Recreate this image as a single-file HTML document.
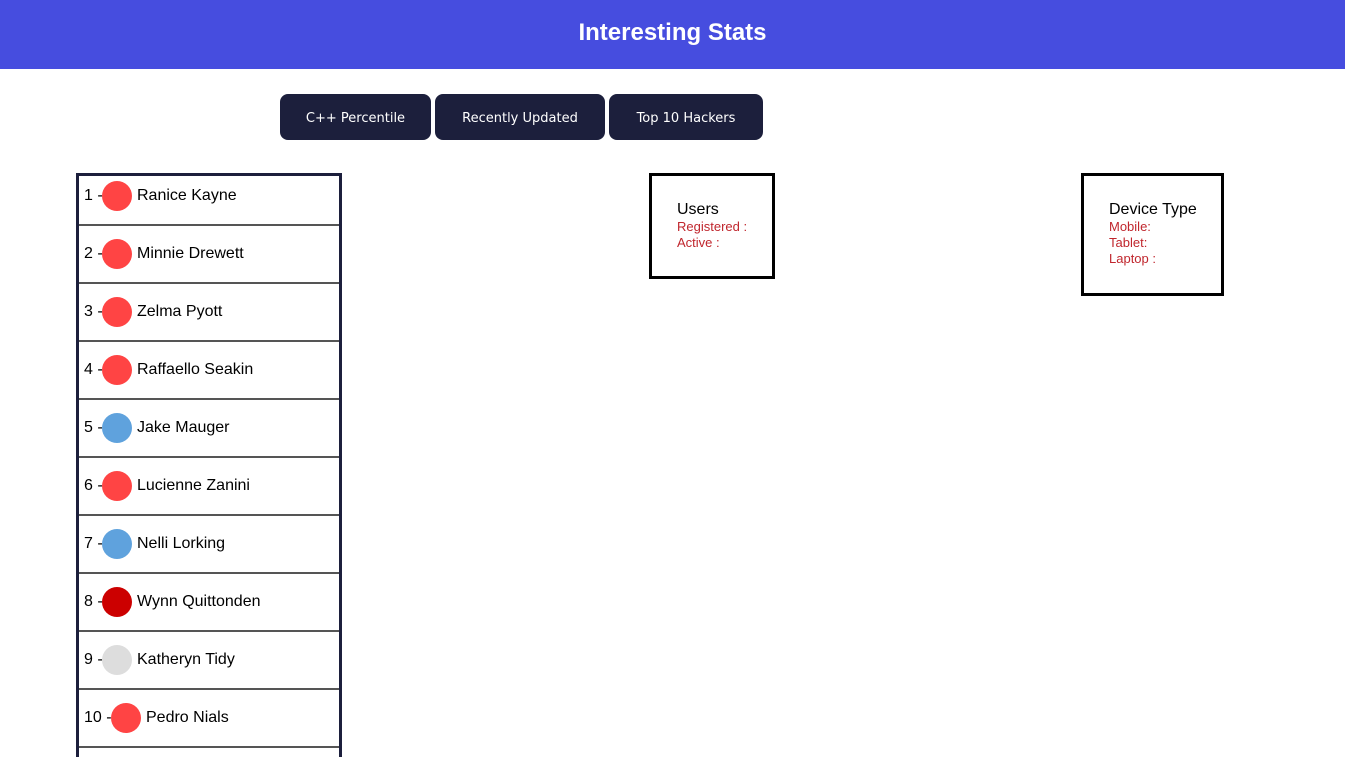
<!DOCTYPE html>
<html><head><meta charset="utf-8"><style>
*{margin:0;padding:0;box-sizing:border-box}
html,body{width:1345px;height:757px;overflow:hidden}
body{background:#fff;font-family:"Liberation Sans",Arial,Helvetica,sans-serif;position:relative}
.hdr{height:69px;background:#464ddf;color:#fff;font-weight:bold;font-size:24px;text-align:center;line-height:66px}
.btn{position:absolute;top:94px;height:46px;background:#1c1f3c;color:#fff;border-radius:8px;font-size:13px;font-family:"DejaVu Sans","Liberation Sans",sans-serif;display:flex;align-items:center;justify-content:center;padding-top:2px}
.list{position:absolute;left:76px;top:173px;width:266px;height:584px;border:3px solid #1c1f3c;border-bottom:none;overflow:hidden}
.in{position:absolute;left:0;top:-8px;width:100%}
.row{height:58px;border-bottom:2px solid #555;position:relative;font-size:16px;color:#000}
.row .t{position:absolute;left:5px;top:19px;white-space:nowrap}
.av{position:absolute;top:13px;width:30px;height:30px;border-radius:50%}
.row .n{position:absolute;top:19px;white-space:nowrap}
.box{position:absolute;border:3px solid #000;padding:25px 0 0 25px;font-size:16px}
.box div{color:#c0262d;font-size:13px;line-height:16px}
</style></head><body>
<div class="hdr">Interesting Stats</div>
<div class="btn" style="left:280px;width:151px">C++ Percentile</div>
<div class="btn" style="left:435px;width:170px">Recently Updated</div>
<div class="btn" style="left:609px;width:154px">Top 10 Hackers</div>
<div class="list"><div class="in">
<div class="row"><span class="t">1 -</span><span class="av" style="left:23px;background:#ff4444"></span><span class="n" style="left:58px">Ranice Kayne</span></div>
<div class="row"><span class="t">2 -</span><span class="av" style="left:23px;background:#ff4444"></span><span class="n" style="left:58px">Minnie Drewett</span></div>
<div class="row"><span class="t">3 -</span><span class="av" style="left:23px;background:#ff4444"></span><span class="n" style="left:58px">Zelma Pyott</span></div>
<div class="row"><span class="t">4 -</span><span class="av" style="left:23px;background:#ff4444"></span><span class="n" style="left:58px">Raffaello Seakin</span></div>
<div class="row"><span class="t">5 -</span><span class="av" style="left:23px;background:#5fa2dd"></span><span class="n" style="left:58px">Jake Mauger</span></div>
<div class="row"><span class="t">6 -</span><span class="av" style="left:23px;background:#ff4444"></span><span class="n" style="left:58px">Lucienne Zanini</span></div>
<div class="row"><span class="t">7 -</span><span class="av" style="left:23px;background:#5fa2dd"></span><span class="n" style="left:58px">Nelli Lorking</span></div>
<div class="row"><span class="t">8 -</span><span class="av" style="left:23px;background:#cc0000"></span><span class="n" style="left:58px">Wynn Quittonden</span></div>
<div class="row"><span class="t">9 -</span><span class="av" style="left:23px;background:#dddddd"></span><span class="n" style="left:58px">Katheryn Tidy</span></div>
<div class="row"><span class="t">10 -</span><span class="av" style="left:32px;background:#ff4444"></span><span class="n" style="left:67px">Pedro Nials</span></div>
<div class="row"></div>
</div></div>
<div class="box" style="left:649px;top:173px;width:126px;height:106px">Users<div>Registered :</div><div>Active :</div></div>
<div class="box" style="left:1081px;top:173px;width:143px;height:123px">Device Type<div>Mobile:</div><div>Tablet:</div><div>Laptop :</div></div>
</body></html>
